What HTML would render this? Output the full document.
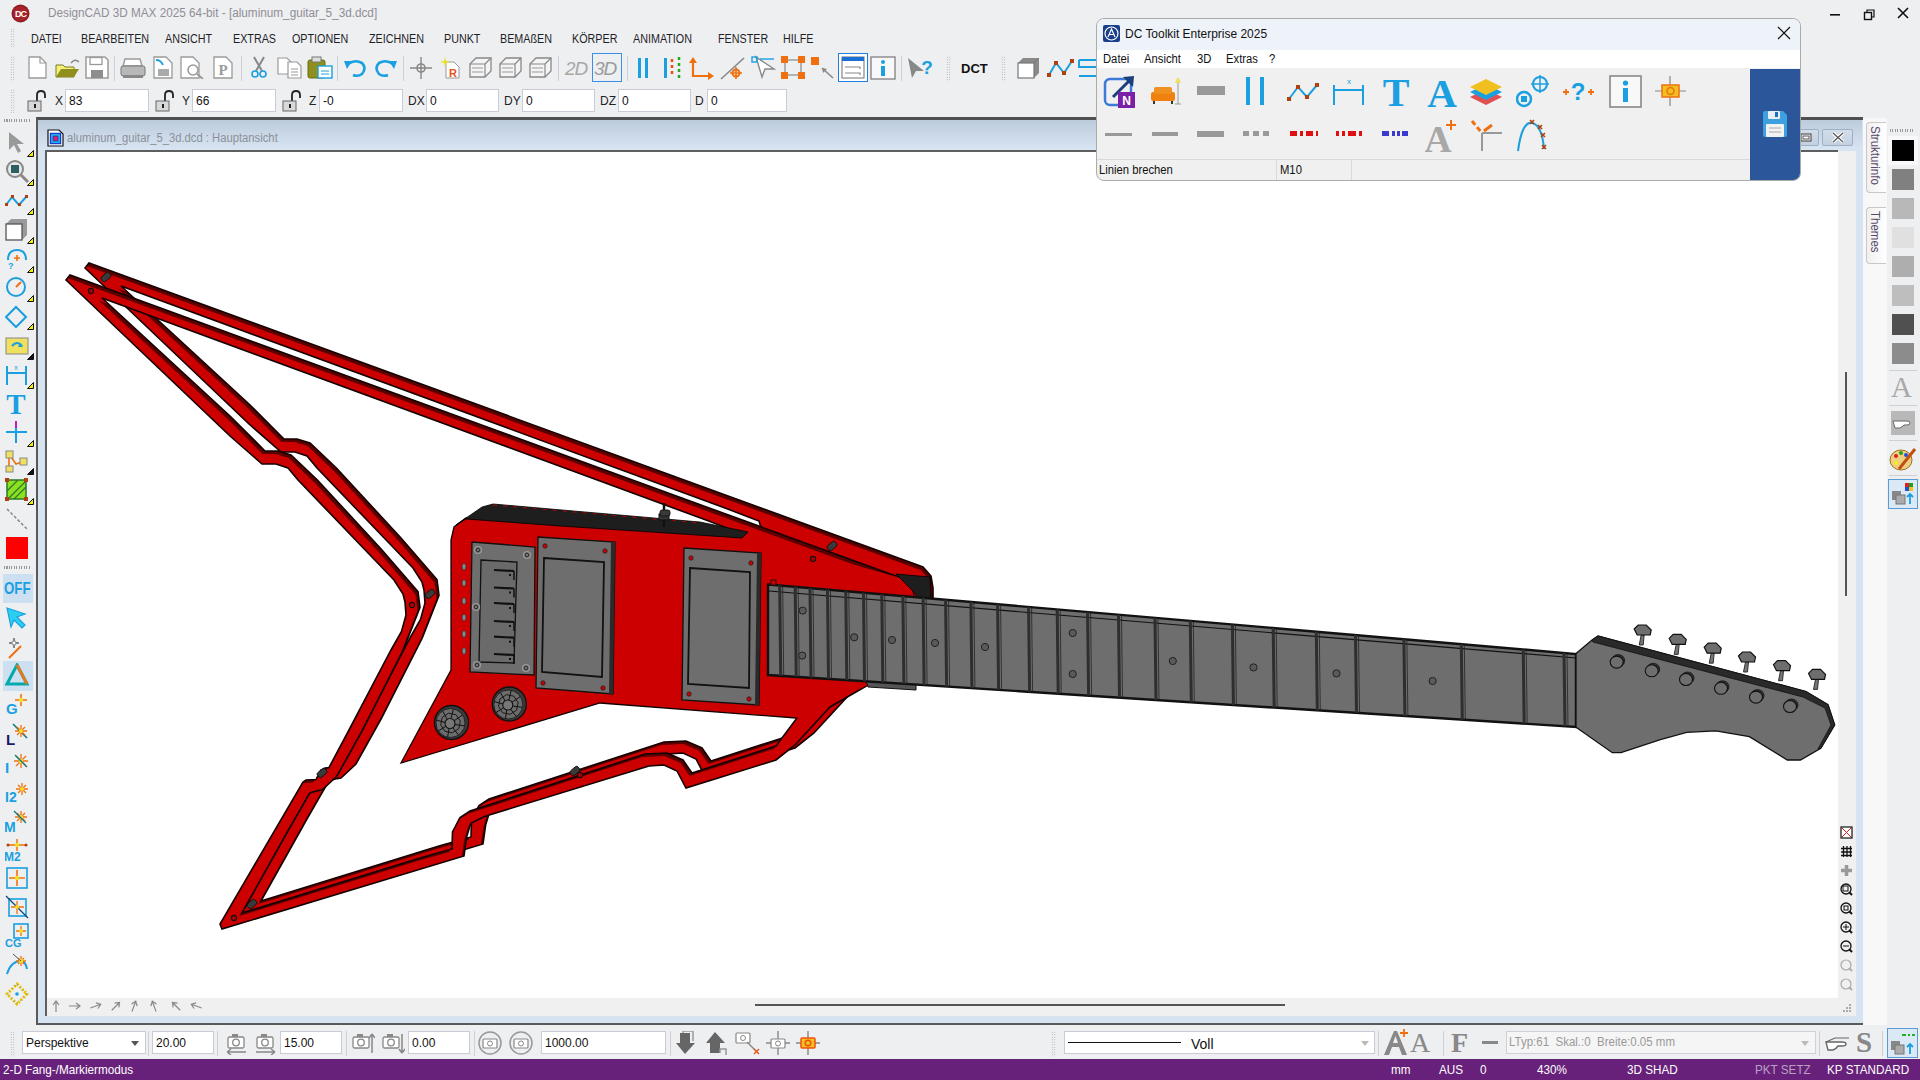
<!DOCTYPE html>
<html><head><meta charset="utf-8">
<style>
*{margin:0;padding:0;box-sizing:border-box}
html,body{width:1920px;height:1080px;overflow:hidden;background:#eeeff1;font-family:"Liberation Sans",sans-serif;position:relative}
.a{position:absolute}
.t{position:absolute;white-space:nowrap;font-size:12px;color:#1a1a1a;line-height:1}
.inp{position:absolute;background:#fff;border:1px solid #c9ccd8}
.inp span{position:absolute;left:3px;top:4px;font-size:12px;color:#111;white-space:nowrap}
.grip{position:absolute;width:5px;background-image:radial-gradient(#a0a0a0 0.7px,transparent 0.8px);background-size:2.5px 2.5px}
</style></head>
<body>
<svg class="a" style="left:11px;top:4px" width="19" height="19" viewBox="0 0 19 19"><circle cx="9.5" cy="9.5" r="9" fill="#8e1b1f"/><circle cx="9.5" cy="9.5" r="7.5" fill="#a8242a"/><text x="9.5" y="13" font-family="Liberation Sans" font-weight="bold" font-size="9" fill="#fff" text-anchor="middle" letter-spacing="-1">DC</text></svg>
<div class="t" style="left:48px;top:7px;font-size:12.5px;color:#8e8e96;transform:scaleX(0.94);transform-origin:left">DesignCAD 3D MAX 2025 64-bit - [aluminum_guitar_5_3d.dcd]</div>
<svg class="a" style="left:1829px;top:9px" width="12" height="12" viewBox="0 0 12 12"><rect x="1" y="5" width="10" height="1.6" fill="#111"/></svg>
<svg class="a" style="left:1862px;top:8px" width="14" height="14" viewBox="0 0 14 14"><rect x="2.5" y="4.5" width="7" height="7" fill="none" stroke="#111" stroke-width="1.4"/><path d="M5,4.5 V2 H12 V9 H9.5" fill="none" stroke="#111" stroke-width="1.2"/></svg>
<svg class="a" style="left:1897px;top:7px" width="12" height="12" viewBox="0 0 12 12"><path d="M1,1 L11,11 M11,1 L1,11" stroke="#111" stroke-width="1.6"/></svg>
<div class="grip" style="left:10px;top:28px;height:19px"></div>
<div class="t" style="left:31px;top:33px;font-size:12.5px;color:#1e1e28;transform:scaleX(0.86);transform-origin:left">DATEI</div>
<div class="t" style="left:81px;top:33px;font-size:12.5px;color:#1e1e28;transform:scaleX(0.86);transform-origin:left">BEARBEITEN</div>
<div class="t" style="left:165px;top:33px;font-size:12.5px;color:#1e1e28;transform:scaleX(0.86);transform-origin:left">ANSICHT</div>
<div class="t" style="left:233px;top:33px;font-size:12.5px;color:#1e1e28;transform:scaleX(0.86);transform-origin:left">EXTRAS</div>
<div class="t" style="left:292px;top:33px;font-size:12.5px;color:#1e1e28;transform:scaleX(0.86);transform-origin:left">OPTIONEN</div>
<div class="t" style="left:369px;top:33px;font-size:12.5px;color:#1e1e28;transform:scaleX(0.86);transform-origin:left">ZEICHNEN</div>
<div class="t" style="left:444px;top:33px;font-size:12.5px;color:#1e1e28;transform:scaleX(0.86);transform-origin:left">PUNKT</div>
<div class="t" style="left:500px;top:33px;font-size:12.5px;color:#1e1e28;transform:scaleX(0.86);transform-origin:left">BEMAßEN</div>
<div class="t" style="left:572px;top:33px;font-size:12.5px;color:#1e1e28;transform:scaleX(0.86);transform-origin:left">KÖRPER</div>
<div class="t" style="left:633px;top:33px;font-size:12.5px;color:#1e1e28;transform:scaleX(0.86);transform-origin:left">ANIMATION</div>
<div class="t" style="left:718px;top:33px;font-size:12.5px;color:#1e1e28;transform:scaleX(0.86);transform-origin:left">FENSTER</div>
<div class="t" style="left:783px;top:33px;font-size:12.5px;color:#1e1e28;transform:scaleX(0.86);transform-origin:left">HILFE</div>
<div class="grip" style="left:10px;top:56px;height:26px"></div>
<svg class="a" style="left:27px;top:56px" width="22" height="23" viewBox="0 0 22 23"><path d="M2,1 H13 L19,7 V22 H2 Z" fill="#fff" stroke="#9a9a9a" stroke-width="1.3"/><path d="M13,1 V7 H19" fill="none" stroke="#9a9a9a" stroke-width="1.2"/></svg>
<svg class="a" style="left:54px;top:57px" width="27" height="22" viewBox="0 0 27 22"><path d="M2,8 H9 L11,10 H20 V20 H2 Z" fill="#f5f07a" stroke="#7a7a20"/><path d="M2,20 L7,12 H25 L20,20 Z" fill="#8f8f1e"/><path d="M17,6 Q21,1 25,5" fill="none" stroke="#888" stroke-width="1.5"/></svg>
<svg class="a" style="left:85px;top:56px" width="24" height="23" viewBox="0 0 24 23"><path d="M1,1 H20 L23,4 V22 H1 Z" fill="#fff" stroke="#9a9a9a" stroke-width="1.5"/><rect x="5" y="1.5" width="12" height="7" fill="#fff" stroke="#9a9a9a" stroke-width="1.3"/><rect x="6" y="14" width="12" height="8" fill="#8e8e8e"/></svg>
<div class="a" style="left:114px;top:56px;width:1px;height:25px;background:#cfd0d6"></div>
<svg class="a" style="left:120px;top:57px" width="26" height="22" viewBox="0 0 26 22"><path d="M5,2 H20 L22,9 H3 Z" fill="#fff" stroke="#9a9a9a" stroke-width="1.4"/><rect x="1" y="9" width="24" height="10" rx="2" fill="#b8b8b8" stroke="#777"/><rect x="3" y="18" width="20" height="3" fill="#888"/></svg>
<svg class="a" style="left:153px;top:56px" width="21" height="23" viewBox="0 0 21 23"><path d="M1,1 H13 L19,7 V22 H1 Z" fill="#fff" stroke="#9a9a9a" stroke-width="1.3"/><rect x="5" y="13" width="11" height="7" fill="#aaa"/><path d="M3,4 Q8,4 10,9" stroke="#1aa0e0" stroke-width="1.8" fill="none"/></svg>
<svg class="a" style="left:180px;top:56px" width="26" height="23" viewBox="0 0 26 23"><path d="M1,1 H13 L19,7 V22 H1 Z" fill="#fff" stroke="#9a9a9a" stroke-width="1.3"/><circle cx="13" cy="14" r="5" fill="#fff" stroke="#9a9a9a" stroke-width="1.6"/><path d="M17,18 L23,23" stroke="#9a9a9a" stroke-width="2"/></svg>
<svg class="a" style="left:213px;top:56px" width="21" height="23" viewBox="0 0 21 23"><path d="M1,1 H13 L19,7 V22 H1 Z" fill="#fff" stroke="#9a9a9a" stroke-width="1.3"/><text x="10" y="19" font-family="Liberation Serif" font-weight="bold" font-size="15" fill="#9a9a9a" text-anchor="middle">P</text></svg>
<div class="a" style="left:241px;top:56px;width:1px;height:25px;background:#cfd0d6"></div>
<svg class="a" style="left:250px;top:56px" width="18" height="23" viewBox="0 0 18 23"><path d="M4,1 L12,15 M14,1 L6,15" stroke="#888" stroke-width="2"/><circle cx="5" cy="18" r="3" fill="none" stroke="#1aa0e0" stroke-width="1.6"/><circle cx="13" cy="18" r="3" fill="none" stroke="#1aa0e0" stroke-width="1.6"/></svg>
<svg class="a" style="left:277px;top:56px" width="26" height="23" viewBox="0 0 26 23"><path d="M1,2 H10 L14,6 V18 H1 Z" fill="#fff" stroke="#9a9a9a" stroke-width="1.2"/><path d="M11,6 H20 L24,10 V22 H11 Z" fill="#fff" stroke="#9a9a9a" stroke-width="1.2"/><path d="M14,13 H21 M14,16 H21 M14,19 H21" stroke="#9a9a9a"/></svg>
<svg class="a" style="left:307px;top:56px" width="26" height="23" viewBox="0 0 26 23"><rect x="1" y="4" width="17" height="18" rx="2" fill="#8f8f1e" stroke="#6a6a10"/><rect x="5" y="1" width="9" height="5" fill="#ddd" stroke="#777"/><rect x="11" y="10" width="14" height="12" fill="#fff" stroke="#1aa0e0" stroke-width="1.4"/><path d="M14,15 H22 M14,18 H22" stroke="#1aa0e0"/></svg>
<div class="a" style="left:337px;top:56px;width:1px;height:25px;background:#cfd0d6"></div>
<svg class="a" style="left:343px;top:58px" width="25" height="20" viewBox="0 0 25 20"><path d="M5,6 Q12,1 19,5 Q24,10 19,16 Q15,19 10,17" fill="none" stroke="#1aa0e0" stroke-width="2.6"/><path d="M1,3 L9,3 L4,11 Z" fill="#1aa0e0"/></svg>
<svg class="a" style="left:373px;top:58px" width="25" height="20" viewBox="0 0 25 20"><path d="M20,6 Q13,1 6,5 Q1,10 6,16 Q10,19 15,17" fill="none" stroke="#1aa0e0" stroke-width="2.6"/><path d="M24,3 L16,3 L21,11 Z" fill="#1aa0e0"/></svg>
<div class="a" style="left:403px;top:56px;width:1px;height:25px;background:#cfd0d6"></div>
<svg class="a" style="left:409px;top:56px" width="24" height="24" viewBox="0 0 24 24"><path d="M12,1 V23 M1,12 H23" stroke="#888" stroke-width="1.4"/><circle cx="12" cy="12" r="4" fill="none" stroke="#888" stroke-width="1.6"/><circle cx="12" cy="12" r="1.3" fill="#888"/></svg>
<svg class="a" style="left:440px;top:56px" width="23" height="23" viewBox="0 0 23 23"><path d="M6,6 H14 L19,11 V22 H6 Z" fill="#fff" stroke="#999"/><path d="M5,1 L6,5 L10,6 L6,7 L5,11 L4,7 L0,6 L4,5 Z" fill="#f0e020"/><text x="13" y="21" font-family="Liberation Sans" font-weight="bold" font-size="11" fill="#e8501a" text-anchor="middle">R</text></svg>
<svg class="a" style="left:468px;top:56px" width="25" height="23" viewBox="0 0 25 23"><path d="M2,8 L8,2 H23 V15 L17,21 H2 Z" fill="#f4f4f4" stroke="#888" stroke-width="1.3"/><path d="M2,8 H17 V21 M17,8 L23,2" stroke="#888" fill="none" stroke-width="1.2"/><path d="M4,12 H15 M4,16 H15" stroke="#999"/></svg>
<svg class="a" style="left:498px;top:56px" width="25" height="23" viewBox="0 0 25 23"><path d="M2,8 L8,2 H23 V15 L17,21 H2 Z" fill="#f4f4f4" stroke="#888" stroke-width="1.3"/><path d="M2,8 H17 V21 M17,8 L23,2" stroke="#888" fill="none" stroke-width="1.2"/><path d="M4,12 H15 M4,16 H15" stroke="#999"/></svg>
<svg class="a" style="left:528px;top:56px" width="25" height="23" viewBox="0 0 25 23"><path d="M2,8 L8,2 H23 V15 L17,21 H2 Z" fill="#f4f4f4" stroke="#888" stroke-width="1.3"/><path d="M2,8 H17 V21 M17,8 L23,2" stroke="#888" fill="none" stroke-width="1.2"/><path d="M4,12 H15 M4,16 H15" stroke="#999"/></svg>
<div class="a" style="left:558px;top:56px;width:1px;height:25px;background:#cfd0d6"></div>
<div class="t" style="left:565px;top:59px;font-size:19px;color:#a8a8a8;font-style:italic;letter-spacing:-1px">2D</div>
<div class="a" style="left:592px;top:53px;width:30px;height:29px;background:transparent;border:1.5px solid #3a8ee6"></div>
<div class="t" style="left:594px;top:59px;font-size:19px;color:#9a9a9a;font-style:italic;letter-spacing:-1px">3D</div>
<div class="a" style="left:627px;top:56px;width:1px;height:25px;background:#cfd0d6"></div>
<svg class="a" style="left:637px;top:57px" width="13" height="22" viewBox="0 0 13 22"><rect x="1" y="1" width="3" height="20" fill="#1aa0e0"/><rect x="8" y="1" width="3" height="20" fill="#1aa0e0"/></svg>
<svg class="a" style="left:663px;top:56px" width="20" height="24" viewBox="0 0 20 24"><rect x="1" y="2" width="3" height="20" fill="#1aa0e0"/><path d="M9,3 V21" stroke="#e8501a" stroke-width="2.5" stroke-dasharray="3,3"/><path d="M16,1 V23" stroke="#22aa22" stroke-width="2.5" stroke-dasharray="3,3"/></svg>
<svg class="a" style="left:689px;top:56px" width="26" height="24" viewBox="0 0 26 24"><path d="M4,3 V20 H23" fill="none" stroke="#f07010" stroke-width="2.2"/><path d="M0,7 L4,1 L8,7 Z M19,16 L25,20 L19,24 Z" fill="#f07010"/></svg>
<svg class="a" style="left:720px;top:56px" width="26" height="24" viewBox="0 0 26 24"><path d="M1,23 L24,2" stroke="#888" stroke-width="1.6"/><circle cx="16" cy="17" r="3.5" fill="none" stroke="#f07010" stroke-width="2"/><path d="M16,11 V23 M10,17 H22" stroke="#f07010" stroke-width="1.6"/></svg>
<svg class="a" style="left:750px;top:55px" width="26" height="25" viewBox="0 0 26 25"><path d="M6,2 L12,22 L15,14 L24,14 Z" fill="#fff" stroke="#888" stroke-width="1.4"/><rect x="2" y="2" width="5" height="5" fill="none" stroke="#1aa0e0" stroke-width="1.4"/><path d="M10,4 H24" stroke="#1aa0e0" stroke-width="1.4"/></svg>
<svg class="a" style="left:780px;top:55px" width="26" height="25" viewBox="0 0 26 25"><rect x="5" y="5" width="16" height="15" fill="none" stroke="#888" stroke-width="1.2"/><rect x="1" y="1" width="7" height="7" fill="#f07010"/><rect x="18" y="1" width="7" height="7" fill="#f07010"/><rect x="1" y="17" width="7" height="7" fill="#f07010"/><rect x="18" y="17" width="7" height="7" fill="#f07010"/></svg>
<svg class="a" style="left:810px;top:55px" width="26" height="25" viewBox="0 0 26 25"><rect x="1" y="2" width="8" height="8" fill="#f07010"/><path d="M12,13 L23,23" stroke="#888" stroke-width="1.6"/><path d="M12,13 L17,14 L13,18 Z" fill="#888"/></svg>
<div class="a" style="left:838px;top:53px;width:30px;height:29px;background:#fff;border:1.5px solid #1e7fe0"></div>
<svg class="a" style="left:841px;top:56px" width="24" height="23" viewBox="0 0 24 23"><rect x="1" y="1" width="22" height="21" fill="#fff" stroke="#888" stroke-width="1.2"/><rect x="1" y="1" width="22" height="4" fill="#1a6fd4"/><path d="M4,11 H19 V13 M4,17 H19 V19" fill="none" stroke="#888" stroke-width="1.2"/></svg>
<svg class="a" style="left:870px;top:56px" width="26" height="24" viewBox="0 0 26 24"><rect x="1" y="1" width="24" height="22" fill="#f8f8f8" stroke="#888" stroke-width="1.4"/><circle cx="13" cy="6" r="2" fill="#1a9fe0"/><rect x="11" y="10" width="4" height="10" fill="#1a9fe0"/></svg>
<div class="a" style="left:901px;top:56px;width:1px;height:25px;background:#cfd0d6"></div>
<svg class="a" style="left:906px;top:56px" width="28" height="24" viewBox="0 0 28 24"><path d="M2,2 L6,22 L10,15 L18,15 Z" fill="#888"/><text x="21" y="18" font-family="Liberation Sans" font-weight="bold" font-size="19" fill="#1a9fe0" text-anchor="middle">?</text></svg>
<div class="grip" style="left:946px;top:56px;height:26px"></div>
<div class="t" style="left:961px;top:62px;font-size:13px;color:#111;font-weight:bold">DCT</div>
<div class="grip" style="left:1001px;top:56px;height:26px"></div>
<svg class="a" style="left:1016px;top:56px" width="25" height="24" viewBox="0 0 25 24"><path d="M2,7 L7,2 H23 V17 L18,22 H2 Z" fill="#8a8a8a"/><rect x="2" y="7" width="16" height="15" fill="#fff" stroke="#777" stroke-width="1.2"/><path d="M18,7 L23,2" stroke="#777"/></svg>
<svg class="a" style="left:1047px;top:58px" width="27" height="20" viewBox="0 0 27 20"><path d="M2,17 L9,5 L17,15 L25,3" fill="none" stroke="#1a9fe0" stroke-width="2"/><rect x="0" y="15" width="4" height="4" fill="#b04010"/><rect x="7" y="3" width="4" height="4" fill="#b04010"/><rect x="15" y="13" width="4" height="4" fill="#b04010"/><rect x="23" y="1" width="4" height="4" fill="#b04010"/></svg>
<svg class="a" style="left:1077px;top:56px" width="20" height="24" viewBox="0 0 20 24"><path d="M2,4 H20 M2,4 V11 H20 M2,20 H20 V13" fill="none" stroke="#1a9fe0" stroke-width="2"/></svg>
<div class="grip" style="left:10px;top:89px;height:24px"></div>
<svg class="a" style="left:27px;top:90px" width="20" height="22" viewBox="0 0 20 22"><path d="M10,11 V5 Q10,1 14,1 Q18,1 18,5 V8" fill="none" stroke="#222" stroke-width="1.8"/><rect x="1" y="11" width="13" height="10" fill="#d8d8d8" stroke="#666"/><rect x="7" y="14" width="2" height="4" fill="#222"/></svg>
<div class="t" style="left:55px;top:95px;font-size:12px;color:#222;">X</div>
<div class="inp" style="left:65px;top:89px;width:84px;height:23px;"><span>83</span></div>
<svg class="a" style="left:155px;top:90px" width="20" height="22" viewBox="0 0 20 22"><path d="M10,11 V5 Q10,1 14,1 Q18,1 18,5 V8" fill="none" stroke="#222" stroke-width="1.8"/><rect x="1" y="11" width="13" height="10" fill="#d8d8d8" stroke="#666"/><rect x="7" y="14" width="2" height="4" fill="#222"/></svg>
<div class="t" style="left:182px;top:95px;font-size:12px;color:#222;">Y</div>
<div class="inp" style="left:192px;top:89px;width:84px;height:23px;"><span>66</span></div>
<svg class="a" style="left:282px;top:90px" width="20" height="22" viewBox="0 0 20 22"><path d="M10,11 V5 Q10,1 14,1 Q18,1 18,5 V8" fill="none" stroke="#222" stroke-width="1.8"/><rect x="1" y="11" width="13" height="10" fill="#d8d8d8" stroke="#666"/><rect x="7" y="14" width="2" height="4" fill="#222"/></svg>
<div class="t" style="left:309px;top:95px;font-size:12px;color:#222;">Z</div>
<div class="inp" style="left:319px;top:89px;width:84px;height:23px;"><span>-0</span></div>
<div class="t" style="left:408px;top:95px;font-size:12px;color:#222;">DX</div>
<div class="inp" style="left:426px;top:89px;width:73px;height:23px;"><span>0</span></div>
<div class="t" style="left:504px;top:95px;font-size:12px;color:#222;">DY</div>
<div class="inp" style="left:522px;top:89px;width:73px;height:23px;"><span>0</span></div>
<div class="t" style="left:600px;top:95px;font-size:12px;color:#222;">DZ</div>
<div class="inp" style="left:618px;top:89px;width:73px;height:23px;"><span>0</span></div>
<div class="t" style="left:695px;top:95px;font-size:12px;color:#222;">D</div>
<div class="inp" style="left:707px;top:89px;width:80px;height:23px;"><span>0</span></div>

<div class="a" style="left:36px;top:117px;width:1827px;height:908px;background:#d6e3f1;border-top:3px solid #505050;border-left:2px solid #595959;border-bottom:2px solid #595959"></div>
<div class="a" style="left:38px;top:120px;width:1824px;height:30px;background:linear-gradient(#bccbdb,#d8e5f3)"></div>
<svg class="a" style="left:47px;top:129px" width="17" height="18" viewBox="0 0 17 18"><path d="M1,1 H12 L16,5 V17 H1 Z" fill="#fff" stroke="#111" stroke-width="1.2"/><rect x="3.5" y="4.5" width="10" height="10" fill="#2ad0f0" stroke="#1a3fd0" stroke-width="1.5"/><rect x="6" y="7" width="5" height="5" fill="#e02060" stroke="#1a3fd0"/></svg>
<div class="t" style="left:67px;top:132px;font-size:12.5px;color:#8c9099;transform:scaleX(0.9);transform-origin:left">aluminum_guitar_5_3d.dcd : Hauptansicht</div>
<div class="a" style="left:45px;top:150px;width:1793px;height:866px;background:#fff;border-left:2px solid #5e5e5e;border-top:2px solid #5e5e5e"></div>
<div class="a" style="left:47px;top:998px;width:1791px;height:18px;background:#f0f0f0"></div>
<div class="a" style="left:1838px;top:151px;width:18px;height:865px;background:#f0f0f0"></div>
<div class="a" style="left:1790px;top:129px;width:29px;height:17px;border:1px solid #9fb0c6;border-radius:2px;background:linear-gradient(#d3deea,#c3d0df)"></div>
<div class="a" style="left:1822px;top:129px;width:31px;height:17px;border:1px solid #9fb0c6;border-radius:2px;background:linear-gradient(#d3deea,#c3d0df)"></div>
<svg class="a" style="left:1800px;top:133px" width="12" height="9" viewBox="0 0 12 9"><rect x="1" y="1" width="10" height="7" fill="#fff" stroke="#555" stroke-width="1.2"/><rect x="3" y="3" width="6" height="3" fill="none" stroke="#555"/></svg>
<svg class="a" style="left:1831px;top:132px" width="14" height="11" viewBox="0 0 14 11"><path d="M2,1 L12,10 M12,1 L2,10" stroke="#fff" stroke-width="3.5"/><path d="M2,1 L12,10 M12,1 L2,10" stroke="#555" stroke-width="1.2"/></svg>

<svg id="guitar" class="a" style="left:0;top:0" width="1920" height="1080">
<defs>
<path id="frame" fill-rule="evenodd" clip-rule="evenodd" d="M66,280 L70,275 L904,579 L912,588 L914,600 L914,640 L900,660 L868,685 L830,707 L795,745 L776,760 L686,788 L677,771 L664,765 L649,766 L486,816 L482.5,817.5 L470.8,823.3 L466.7,836.7 L464,856 L222,929 L220,924 L303,782 L306,780 L316,779.5 L321,770 L329,767.5 L349,730 L391,650 L401.5,631.5 L406,615 L405,602 L403,594 L394,580 L370,555 L298,480 L288,468 L276,464 L262,464 L230,436 Z
M102,298 L706,520 L740,533 L790,700 L797,718 L776,746 L692,773 L683,760 L667,753 L645,754 L470,811 L460,817.5 L452.5,832 L452,849 L420,858 L242,913 L288.5,830 L309.8,793 L318,790.6 L322,790 L337,776 L362.6,730 L403.3,650 L420,607.4 L418,591.7 L382,550 L317.4,480 L291,455 L278,451 L265,451 L230,416 Z"/>
<clipPath id="fc"><use href="#frame"/></clipPath>
</defs>
<g transform="translate(19,-12)"><use href="#frame" fill="#5a0000"/><g clip-path="url(#fc)"><use href="#frame" transform="translate(-2.5,3)" fill="#cc0000"/></g><use href="#frame" fill="none" stroke="#150000" stroke-width="1.6"/></g>
<use href="#frame" fill="#5a0000"/><g clip-path="url(#fc)"><use href="#frame" transform="translate(-2.5,3)" fill="#cc0000"/></g><use href="#frame" fill="none" stroke="#150000" stroke-width="1.6"/>
<path fill="#cc0000" d="M401,763 L451,670 L451,540 L454,527 L466,518 L745,534 L904,579 L912,588 L914,600 L914,640 L900,660 L868,685 L796,718 L600,703 Z"/>
<path fill="none" stroke="#150000" stroke-width="1.3" d="M745,534 L560,523 L466,518 L454,527 L451,540 L451,670 L401,763 L600,703 L796,718"/>
<path fill="#1e1e1e" stroke="#000" stroke-width="0.8" d="M456,525 L482,507 L493,504 L700,522 L748,532 L742,538 L560,526 L466,519 Z"/>
<path fill="none" stroke="#cc0000" stroke-width="0.8" stroke-dasharray="4,6" d="M493,505 L700,523"/>
<path d="M664,503 V527" stroke="#111" stroke-width="2.5"/><rect x="659" y="514" width="10" height="6" fill="#333" stroke="#111"/>
<path fill="#1e1e1e" stroke="#000" stroke-width="0.8" d="M896,574 L930,577 L931,598 L918,598 L912,590 Z"/>
<circle cx="813" cy="559" r="2.6" fill="#aa0000" stroke="#111" stroke-width="1.1"/>
<circle cx="580" cy="775" r="2.6" fill="#aa0000" stroke="#111" stroke-width="1.1"/>
<circle cx="91" cy="291" r="2.6" fill="#aa0000" stroke="#111" stroke-width="1.1"/>
<circle cx="412" cy="605" r="2.6" fill="#aa0000" stroke="#111" stroke-width="1.1"/>
<circle cx="234" cy="918" r="2.6" fill="#aa0000" stroke="#111" stroke-width="1.1"/>
<g transform="translate(106,277) rotate(-40)"><rect x="-5" y="-3" width="10" height="6" rx="2" fill="#3a3a3a" stroke="#111" stroke-width="0.9"/></g>
<g transform="translate(430,594) rotate(-40)"><rect x="-5" y="-3" width="10" height="6" rx="2" fill="#3a3a3a" stroke="#111" stroke-width="0.9"/></g>
<g transform="translate(252,904) rotate(-40)"><rect x="-5" y="-3" width="10" height="6" rx="2" fill="#3a3a3a" stroke="#111" stroke-width="0.9"/></g>
<g transform="translate(322,773) rotate(-40)"><rect x="-5" y="-3" width="10" height="6" rx="2" fill="#3a3a3a" stroke="#111" stroke-width="0.9"/></g>
<g transform="translate(575,771) rotate(-40)"><rect x="-5" y="-3" width="10" height="6" rx="2" fill="#3a3a3a" stroke="#111" stroke-width="0.9"/></g>
<g transform="translate(665,513) rotate(0)"><rect x="-5" y="-3" width="10" height="6" rx="2" fill="#3a3a3a" stroke="#111" stroke-width="0.9"/></g>
<g transform="translate(832,546) rotate(-40)"><rect x="-5" y="-3" width="10" height="6" rx="2" fill="#3a3a3a" stroke="#111" stroke-width="0.9"/></g>
<path fill="#6e6e6e" stroke="#111" stroke-width="1.3" d="M472,542 L535,547 L534,675 L470,672 Z"/>
<path fill="#6a6a6a" stroke="#111" stroke-width="1.3" d="M481,560 L517,562 L514,663 L479,662 Z"/>
<path d="M494,570 L514,571" stroke="#111" stroke-width="2.2"/><path d="M514,571 V580" stroke="#111" stroke-width="1.5"/><rect x="509" y="574" width="2" height="2" fill="#111"/>
<path d="M494,587.5 L514,588.5" stroke="#111" stroke-width="2.2"/><path d="M514,588.5 V597.5" stroke="#111" stroke-width="1.5"/><rect x="509" y="591.5" width="2" height="2" fill="#111"/>
<path d="M494,603 L514,604" stroke="#111" stroke-width="2.2"/><path d="M514,604 V613" stroke="#111" stroke-width="1.5"/><rect x="509" y="607" width="2" height="2" fill="#111"/>
<path d="M494,621 L514,622" stroke="#111" stroke-width="2.2"/><path d="M514,622 V631" stroke="#111" stroke-width="1.5"/><rect x="509" y="625" width="2" height="2" fill="#111"/>
<path d="M494,636.7 L514,637.7" stroke="#111" stroke-width="2.2"/><path d="M514,637.7 V646.7" stroke="#111" stroke-width="1.5"/><rect x="509" y="640.7" width="2" height="2" fill="#111"/>
<path d="M494,654 L514,655" stroke="#111" stroke-width="2.2"/><path d="M514,655 V664" stroke="#111" stroke-width="1.5"/><rect x="509" y="658" width="2" height="2" fill="#111"/>
<ellipse cx="464" cy="566.7" rx="2" ry="3.2" fill="#888" stroke="#333" stroke-width="0.8"/>
<ellipse cx="464" cy="583" rx="2" ry="3.2" fill="#888" stroke="#333" stroke-width="0.8"/>
<ellipse cx="464" cy="601" rx="2" ry="3.2" fill="#888" stroke="#333" stroke-width="0.8"/>
<ellipse cx="464" cy="617.5" rx="2" ry="3.2" fill="#888" stroke="#333" stroke-width="0.8"/>
<ellipse cx="464" cy="634" rx="2" ry="3.2" fill="#888" stroke="#333" stroke-width="0.8"/>
<ellipse cx="464" cy="651" rx="2" ry="3.2" fill="#888" stroke="#333" stroke-width="0.8"/>
<circle cx="478" cy="550" r="3.5" fill="#777" stroke="#999" stroke-width="1.2"/><circle cx="478" cy="550" r="1.8" fill="none" stroke="#222" stroke-width="0.9"/>
<circle cx="527" cy="555" r="3.5" fill="#777" stroke="#999" stroke-width="1.2"/><circle cx="527" cy="555" r="1.8" fill="none" stroke="#222" stroke-width="0.9"/>
<circle cx="477" cy="665" r="3.5" fill="#777" stroke="#999" stroke-width="1.2"/><circle cx="477" cy="665" r="1.8" fill="none" stroke="#222" stroke-width="0.9"/>
<circle cx="526" cy="668" r="3.5" fill="#777" stroke="#999" stroke-width="1.2"/><circle cx="526" cy="668" r="1.8" fill="none" stroke="#222" stroke-width="0.9"/>
<circle cx="476" cy="607" r="3.5" fill="#777" stroke="#999" stroke-width="1.2"/><circle cx="476" cy="607" r="1.8" fill="none" stroke="#222" stroke-width="0.9"/>
<path fill="#6e6e6e" stroke="#111" stroke-width="1.3" d="M538,537 L615,542 L613,694 L536,688 Z"/><path fill="#2a2a2a" d="M611,542 L615,542 L613,694 L609,694 Z"/><path fill="#6e6e6e" stroke="#111" stroke-width="1.8" d="M544,558 L604,562 L602,677 L542,672 Z"/><circle cx="545" cy="546" r="2.2" fill="#cc0000" stroke="#222" stroke-width="0.8"/><circle cx="605" cy="551" r="2.2" fill="#cc0000" stroke="#222" stroke-width="0.8"/><circle cx="543" cy="683" r="2.2" fill="#cc0000" stroke="#222" stroke-width="0.8"/><circle cx="603" cy="688" r="2.2" fill="#cc0000" stroke="#222" stroke-width="0.8"/>
<path fill="#6e6e6e" stroke="#111" stroke-width="1.3" d="M684,548 L761,553 L759,705 L682,700 Z"/><path fill="#2a2a2a" d="M757,553 L761,553 L759,705 L755,705 Z"/><path fill="#6e6e6e" stroke="#111" stroke-width="1.8" d="M690,568 L750,572 L749,688 L688,684 Z"/><circle cx="691" cy="558" r="2.2" fill="#cc0000" stroke="#222" stroke-width="0.8"/><circle cx="751" cy="563" r="2.2" fill="#cc0000" stroke="#222" stroke-width="0.8"/><circle cx="689" cy="694" r="2.2" fill="#cc0000" stroke="#222" stroke-width="0.8"/><circle cx="749" cy="699" r="2.2" fill="#cc0000" stroke="#222" stroke-width="0.8"/>
<circle cx="451.5" cy="722.5" r="17" fill="#3a3a3a" stroke="#111" stroke-width="1.4"/><circle cx="450.5" cy="723.0" r="14.5" fill="#6c6c6c" stroke="#222" stroke-width="1"/><circle cx="450.0" cy="723.5" r="5" fill="#777" stroke="#111" stroke-width="1.1"/><path d="M454.9,724.5 L464.2,725.8" stroke="#111" stroke-width="1"/><path d="M452.8,727.7 L458.2,734.7" stroke="#111" stroke-width="1"/><path d="M449.0,728.4 L447.7,736.7" stroke="#111" stroke-width="1"/><path d="M445.8,726.3 L438.8,730.7" stroke="#111" stroke-width="1"/><path d="M445.1,722.5 L436.8,720.2" stroke="#111" stroke-width="1"/><path d="M447.2,719.3 L442.8,711.3" stroke="#111" stroke-width="1"/><path d="M451.0,718.6 L453.3,709.3" stroke="#111" stroke-width="1"/><path d="M454.2,720.7 L462.2,715.3" stroke="#111" stroke-width="1"/><polygon points="458.8,728.6 452.4,732.8 444.9,731.3 440.7,724.9 442.2,717.4 448.6,713.2 456.1,714.7 460.3,721.1" fill="none" stroke="#111" stroke-width="0.9"/>
<circle cx="509.3" cy="704" r="17" fill="#3a3a3a" stroke="#111" stroke-width="1.4"/><circle cx="508.3" cy="704.5" r="14.5" fill="#6c6c6c" stroke="#222" stroke-width="1"/><circle cx="507.8" cy="705" r="5" fill="#777" stroke="#111" stroke-width="1.1"/><path d="M512.7,706.0 L522.0,707.3" stroke="#111" stroke-width="1"/><path d="M510.6,709.2 L516.0,716.2" stroke="#111" stroke-width="1"/><path d="M506.8,709.9 L505.5,718.2" stroke="#111" stroke-width="1"/><path d="M503.6,707.8 L496.6,712.2" stroke="#111" stroke-width="1"/><path d="M502.9,704.0 L494.6,701.7" stroke="#111" stroke-width="1"/><path d="M505.0,700.8 L500.6,692.8" stroke="#111" stroke-width="1"/><path d="M508.8,700.1 L511.1,690.8" stroke="#111" stroke-width="1"/><path d="M512.0,702.2 L520.0,696.8" stroke="#111" stroke-width="1"/><polygon points="516.6,710.1 510.2,714.3 502.7,712.8 498.5,706.4 500.0,698.9 506.4,694.7 513.9,696.2 518.1,702.6" fill="none" stroke="#111" stroke-width="0.9"/>
<path fill="#555" stroke="#111" stroke-width="1" d="M866,680 L916,684 L916,690 L868,687 Z"/>
<path fill="#6e6e6e" stroke="#111" stroke-width="2.4" d="M768,584.5 L1576,654 L1576,727 L768,675 Z"/>
<path fill="none" stroke="#111" stroke-width="1.2" d="M769,591 L1576,658"/>
<path d="M779.7,585.5063737623763 L780.7,675.7529702970297" stroke="#2e2e2e" stroke-width="3"/><path d="M782.7,586.5063737623763 L783.7,675.7529702970297" stroke="#222" stroke-width="0.8"/>
<path d="M795.2,586.8396039603961 L796.2,676.7504950495049" stroke="#2e2e2e" stroke-width="3"/><path d="M798.2,587.8396039603961 L799.2,676.7504950495049" stroke="#222" stroke-width="0.8"/>
<path d="M810,588.1126237623762 L811,677.7029702970297" stroke="#2e2e2e" stroke-width="3"/><path d="M813,589.1126237623762 L814,677.7029702970297" stroke="#222" stroke-width="0.8"/>
<path d="M827.5,589.6178836633663 L828.5,678.8292079207921" stroke="#2e2e2e" stroke-width="3"/><path d="M830.5,590.6178836633663 L831.5,678.8292079207921" stroke="#222" stroke-width="0.8"/>
<path d="M845.8,591.1919554455445 L846.8,680.0069306930693" stroke="#2e2e2e" stroke-width="3"/><path d="M848.8,592.1919554455445 L849.8,680.0069306930693" stroke="#222" stroke-width="0.8"/>
<path d="M863.5,592.7144183168317 L864.5,681.1460396039604" stroke="#2e2e2e" stroke-width="3"/><path d="M866.5,593.7144183168317 L867.5,681.1460396039604" stroke="#222" stroke-width="0.8"/>
<path d="M881.8,594.2884900990099 L882.8,682.3237623762376" stroke="#2e2e2e" stroke-width="3"/><path d="M884.8,595.2884900990099 L885.8,682.3237623762376" stroke="#222" stroke-width="0.8"/>
<path d="M902.9,596.1034034653466 L903.9,683.6816831683168" stroke="#2e2e2e" stroke-width="3"/><path d="M905.9,597.1034034653466 L906.9,683.6816831683168" stroke="#222" stroke-width="0.8"/>
<path d="M923.1,597.8409034653465 L924.1,684.9816831683169" stroke="#2e2e2e" stroke-width="3"/><path d="M926.1,598.8409034653465 L927.1,684.9816831683169" stroke="#222" stroke-width="0.8"/>
<path d="M945.6,599.7762376237624 L946.6,686.4297029702971" stroke="#2e2e2e" stroke-width="3"/><path d="M948.6,600.7762376237624 L949.6,686.4297029702971" stroke="#222" stroke-width="0.8"/>
<path d="M970.9,601.9524133663366 L971.9,688.0579207920792" stroke="#2e2e2e" stroke-width="3"/><path d="M973.9,602.9524133663366 L974.9,688.0579207920792" stroke="#222" stroke-width="0.8"/>
<path d="M997.6,604.2490099009901 L998.6,689.7762376237624" stroke="#2e2e2e" stroke-width="3"/><path d="M1000.6,605.2490099009901 L1001.6,689.7762376237624" stroke="#222" stroke-width="0.8"/>
<path d="M1028.6,606.9154702970297 L1029.6,691.7712871287129" stroke="#2e2e2e" stroke-width="3"/><path d="M1031.6,607.9154702970297 L1032.6,691.7712871287129" stroke="#222" stroke-width="0.8"/>
<path d="M1057.2,609.3754950495049 L1058.2,693.6118811881188" stroke="#2e2e2e" stroke-width="3"/><path d="M1060.2,610.3754950495049 L1061.2,693.6118811881188" stroke="#222" stroke-width="0.8"/>
<path d="M1087.6,611.9903465346534 L1088.6,695.5683168316832" stroke="#2e2e2e" stroke-width="3"/><path d="M1090.6,612.9903465346534 L1091.6,695.5683168316832" stroke="#222" stroke-width="0.8"/>
<path d="M1118.5,614.6482054455446 L1119.5,697.5569306930693" stroke="#2e2e2e" stroke-width="3"/><path d="M1121.5,615.6482054455446 L1122.5,697.5569306930693" stroke="#222" stroke-width="0.8"/>
<path d="M1155,617.7877475247525 L1156,699.9059405940594" stroke="#2e2e2e" stroke-width="3"/><path d="M1158,618.7877475247525 L1159,699.9059405940594" stroke="#222" stroke-width="0.8"/>
<path d="M1190.3,620.8240717821782 L1191.3,702.1777227722772" stroke="#2e2e2e" stroke-width="3"/><path d="M1193.3,621.8240717821782 L1194.3,702.1777227722772" stroke="#222" stroke-width="0.8"/>
<path d="M1232.4,624.4452970297029 L1233.4,704.8871287128713" stroke="#2e2e2e" stroke-width="3"/><path d="M1235.4,625.4452970297029 L1236.4,704.8871287128713" stroke="#222" stroke-width="0.8"/>
<path d="M1273.2,627.954702970297 L1274.2,707.5128712871287" stroke="#2e2e2e" stroke-width="3"/><path d="M1276.2,628.954702970297 L1277.2,707.5128712871287" stroke="#222" stroke-width="0.8"/>
<path d="M1316.3,631.661943069307 L1317.3,710.2866336633664" stroke="#2e2e2e" stroke-width="3"/><path d="M1319.3,632.661943069307 L1320.3,710.2866336633664" stroke="#222" stroke-width="0.8"/>
<path d="M1355.5,635.0337252475248 L1356.5,712.809405940594" stroke="#2e2e2e" stroke-width="3"/><path d="M1358.5,636.0337252475248 L1359.5,712.809405940594" stroke="#222" stroke-width="0.8"/>
<path d="M1403.9,639.196844059406 L1404.9,715.9242574257426" stroke="#2e2e2e" stroke-width="3"/><path d="M1406.9,640.196844059406 L1407.9,715.9242574257426" stroke="#222" stroke-width="0.8"/>
<path d="M1461.3,644.1340965346535 L1462.3,719.6183168316832" stroke="#2e2e2e" stroke-width="3"/><path d="M1464.3,645.1340965346535 L1465.3,719.6183168316832" stroke="#222" stroke-width="0.8"/>
<path d="M1523.2,649.4584158415842 L1524.2,723.6019801980198" stroke="#2e2e2e" stroke-width="3"/><path d="M1526.2,650.4584158415842 L1527.2,723.6019801980198" stroke="#222" stroke-width="0.8"/>
<path d="M1564,652.9678217821782 L1565,726.2277227722773" stroke="#2e2e2e" stroke-width="3"/><path d="M1567,653.9678217821782 L1568,726.2277227722773" stroke="#222" stroke-width="0.8"/>
<circle cx="802.7" cy="610.6" r="3.6" fill="#5a5a5a" stroke="#222" stroke-width="1"/>
<circle cx="802.2" cy="655.6" r="3.6" fill="#5a5a5a" stroke="#222" stroke-width="1"/>
<circle cx="854.2" cy="637.3" r="3.6" fill="#5a5a5a" stroke="#222" stroke-width="1"/>
<circle cx="892" cy="640" r="3.6" fill="#5a5a5a" stroke="#222" stroke-width="1"/>
<circle cx="935" cy="643" r="3.6" fill="#5a5a5a" stroke="#222" stroke-width="1"/>
<circle cx="985" cy="647" r="3.6" fill="#5a5a5a" stroke="#222" stroke-width="1"/>
<circle cx="1072.7" cy="633" r="3.6" fill="#5a5a5a" stroke="#222" stroke-width="1"/>
<circle cx="1072.7" cy="674" r="3.6" fill="#5a5a5a" stroke="#222" stroke-width="1"/>
<circle cx="1172.8" cy="661" r="3.6" fill="#5a5a5a" stroke="#222" stroke-width="1"/>
<circle cx="1253.5" cy="667.4" r="3.6" fill="#5a5a5a" stroke="#222" stroke-width="1"/>
<circle cx="1336.5" cy="673.4" r="3.6" fill="#5a5a5a" stroke="#222" stroke-width="1"/>
<circle cx="1432.6" cy="681" r="3.6" fill="#5a5a5a" stroke="#222" stroke-width="1"/>
<rect x="771" y="580" width="5" height="5" fill="#cc0000" stroke="#111" stroke-width="0.8"/>
<path fill="#6e6e6e" stroke="#111" stroke-width="1.3" d="M1576,653.5 L1592,640 L1598,636 L1806,691.5 L1828,704.6 L1834.7,725 L1820.8,748.3 L1800.4,760 L1787.3,760 L1749.4,736.7 L1715.8,730.8 L1686.7,732.3 L1660.4,739.6 L1621,752.7 L1612.3,752.7 L1576,727.2 Z"/>
<path fill="#2a2a2a" stroke="#111" stroke-width="0.8" d="M1592,640 L1598,636 L1806,691.5 L1828,704.6 L1834.7,725 L1820.8,748.3 L1818,749 L1831,725 L1825,708 L1803,697 L1593,642 Z"/>
<ellipse cx="1618.2" cy="660.6" rx="6.5" ry="6" fill="#333" stroke="#111" stroke-width="0.8"/><ellipse cx="1616.7" cy="662.1" rx="6.5" ry="6" fill="#6e6e6e" stroke="#111" stroke-width="1.1"/>
<ellipse cx="1653.2" cy="669.3" rx="6.5" ry="6" fill="#333" stroke="#111" stroke-width="0.8"/><ellipse cx="1651.7" cy="670.8" rx="6.5" ry="6" fill="#6e6e6e" stroke="#111" stroke-width="1.1"/>
<ellipse cx="1687.5" cy="678" rx="6.5" ry="6" fill="#333" stroke="#111" stroke-width="0.8"/><ellipse cx="1686" cy="679.5" rx="6.5" ry="6" fill="#6e6e6e" stroke="#111" stroke-width="1.1"/>
<ellipse cx="1722.5" cy="686.8" rx="6.5" ry="6" fill="#333" stroke="#111" stroke-width="0.8"/><ellipse cx="1721" cy="688.3" rx="6.5" ry="6" fill="#6e6e6e" stroke="#111" stroke-width="1.1"/>
<ellipse cx="1757.5" cy="695.6" rx="6.5" ry="6" fill="#333" stroke="#111" stroke-width="0.8"/><ellipse cx="1756" cy="697.1" rx="6.5" ry="6" fill="#6e6e6e" stroke="#111" stroke-width="1.1"/>
<ellipse cx="1791.5" cy="705" rx="6.5" ry="6" fill="#333" stroke="#111" stroke-width="0.8"/><ellipse cx="1790" cy="706.5" rx="6.5" ry="6" fill="#6e6e6e" stroke="#111" stroke-width="1.1"/>
<path d="M1639.2,645 L1641.2,635 L1644.2,635 L1643.2,645 Z" fill="#777" stroke="#222" stroke-width="0.9"/>
<path d="M1634.2,629 L1638.2,625 L1646.2,625 L1651.2,630 L1650.2,635 L1637.2,635 Z" fill="#6e6e6e" stroke="#111" stroke-width="1.2"/>
<path d="M1674.2,654.4 L1676.2,644.4 L1679.2,644.4 L1678.2,654.4 Z" fill="#777" stroke="#222" stroke-width="0.9"/>
<path d="M1669.2,638.4 L1673.2,634.4 L1681.2,634.4 L1686.2,639.4 L1685.2,644.4 L1672.2,644.4 Z" fill="#6e6e6e" stroke="#111" stroke-width="1.2"/>
<path d="M1709.2,663.2 L1711.2,653.2 L1714.2,653.2 L1713.2,663.2 Z" fill="#777" stroke="#222" stroke-width="0.9"/>
<path d="M1704.2,647.2 L1708.2,643.2 L1716.2,643.2 L1721.2,648.2 L1720.2,653.2 L1707.2,653.2 Z" fill="#6e6e6e" stroke="#111" stroke-width="1.2"/>
<path d="M1743.5,672 L1745.5,662 L1748.5,662 L1747.5,672 Z" fill="#777" stroke="#222" stroke-width="0.9"/>
<path d="M1738.5,656 L1742.5,652 L1750.5,652 L1755.5,657 L1754.5,662 L1741.5,662 Z" fill="#6e6e6e" stroke="#111" stroke-width="1.2"/>
<path d="M1778.5,680.7 L1780.5,670.7 L1783.5,670.7 L1782.5,680.7 Z" fill="#777" stroke="#222" stroke-width="0.9"/>
<path d="M1773.5,664.7 L1777.5,660.7 L1785.5,660.7 L1790.5,665.7 L1789.5,670.7 L1776.5,670.7 Z" fill="#6e6e6e" stroke="#111" stroke-width="1.2"/>
<path d="M1813.5,689.4 L1815.5,679.4 L1818.5,679.4 L1817.5,689.4 Z" fill="#777" stroke="#222" stroke-width="0.9"/>
<path d="M1808.5,673.4 L1812.5,669.4 L1820.5,669.4 L1825.5,674.4 L1824.5,679.4 L1811.5,679.4 Z" fill="#6e6e6e" stroke="#111" stroke-width="1.2"/>
</svg>
<div class="a" style="left:1845px;top:372px;width:2px;height:224px;background:#555"></div>
<div class="a" style="left:755px;top:1004px;width:530px;height:2px;background:#555"></div>
<svg class="a" style="left:50px;top:994px" width="160" height="24" viewBox="0 0 160 24"><g transform="translate(6,12) rotate(-90)"><path d="M-6,0 H5 M1,-3 L5,0 L1,3" fill="none" stroke="#888" stroke-width="1.2"/></g><g transform="translate(25,12) rotate(0)"><path d="M-6,0 H5 M1,-3 L5,0 L1,3" fill="none" stroke="#888" stroke-width="1.2"/></g><g transform="translate(46,12) rotate(-20)"><path d="M-6,0 H5 M1,-3 L5,0 L1,3" fill="none" stroke="#888" stroke-width="1.2"/></g><g transform="translate(66,12) rotate(-45)"><path d="M-6,0 H5 M1,-3 L5,0 L1,3" fill="none" stroke="#888" stroke-width="1.2"/></g><g transform="translate(84,12) rotate(-70)"><path d="M-6,0 H5 M1,-3 L5,0 L1,3" fill="none" stroke="#888" stroke-width="1.2"/></g><g transform="translate(104,12) rotate(-110)"><path d="M-6,0 H5 M1,-3 L5,0 L1,3" fill="none" stroke="#888" stroke-width="1.2"/></g><g transform="translate(126,12) rotate(-135)"><path d="M-6,0 H5 M1,-3 L5,0 L1,3" fill="none" stroke="#888" stroke-width="1.2"/></g><g transform="translate(146,12) rotate(-160)"><path d="M-6,0 H5 M1,-3 L5,0 L1,3" fill="none" stroke="#888" stroke-width="1.2"/></g></svg>
<svg class="a" style="left:1840px;top:826px" width="14" height="170" viewBox="0 0 14 170"><rect x="1" y="1" width="11" height="11" fill="#fff" stroke="#111" stroke-width="1.2"/><path d="M2,2 L11,11 M11,2 L2,11" stroke="#e02020" stroke-width="1"/><g transform="translate(0,19)"><path d="M1,3.5 H12 M1,7 H12 M1,10.5 H12 M3.5,1 V12 M7,1 V12 M10.5,1 V12" stroke="#111" stroke-width="1.3"/></g><g transform="translate(0,38)"><path d="M6.5,1 V12 M1,6.5 H12" stroke="#999" stroke-width="3.5"/></g><g transform="translate(0,57)"><circle cx="6" cy="6" r="5" fill="none" stroke="#111" stroke-width="1.3"/><path d="M9.5,9.5 L12,12" stroke="#111" stroke-width="2"/><rect x="3" y="3" width="5" height="5" fill="none" stroke="#111"/></g><g transform="translate(0,76)"><circle cx="6" cy="6" r="5" fill="none" stroke="#111" stroke-width="1.3"/><path d="M9.5,9.5 L12,12" stroke="#111" stroke-width="2"/><rect x="4" y="4" width="4" height="4" fill="none" stroke="#111"/></g><g transform="translate(0,95)"><circle cx="6" cy="6" r="5" fill="none" stroke="#111" stroke-width="1.3"/><path d="M9.5,9.5 L12,12" stroke="#111" stroke-width="2"/><path d="M3,6 H9 M6,3 V9" stroke="#111"/></g><g transform="translate(0,114)"><circle cx="6" cy="6" r="5" fill="none" stroke="#111" stroke-width="1.3"/><path d="M9.5,9.5 L12,12" stroke="#111" stroke-width="2"/><path d="M3,6 H9" stroke="#111"/></g><g transform="translate(0,133)"><circle cx="6" cy="6" r="5" fill="none" stroke="#aaa" stroke-width="1.2"/><path d="M9.5,9.5 L12,12" stroke="#aaa" stroke-width="2"/></g><g transform="translate(0,152)"><circle cx="6" cy="6" r="5" fill="none" stroke="#aaa" stroke-width="1.2"/><path d="M9.5,9.5 L12,12" stroke="#aaa" stroke-width="2"/></g></svg>
<svg class="a" style="left:1840px;top:1002px" width="12" height="12" viewBox="0 0 12 12"><g fill="#aaa"><rect x="9" y="2" width="2" height="2"/><rect x="6" y="5" width="2" height="2"/><rect x="9" y="5" width="2" height="2"/><rect x="3" y="8" width="2" height="2"/><rect x="6" y="8" width="2" height="2"/><rect x="9" y="8" width="2" height="2"/></g></svg>

<div class="a" style="left:4px;top:119px;width:26px;height:3px;background-image:repeating-linear-gradient(90deg,#999 0 1px,transparent 1px 2.5px)"></div>
<svg class="a" style="left:5px;top:130px" width="24" height="24" viewBox="0 0 24 24"><path d="M4,2 L4,20 L9,15 L13,23 L16,21 L12,14 L19,14 Z" fill="#999"/></svg>
<svg class="a" style="left:5px;top:159px" width="24" height="24" viewBox="0 0 24 24"><circle cx="10" cy="10" r="8" fill="#e8e8e8" stroke="#888" stroke-width="2"/><rect x="6" y="6" width="8" height="8" fill="#2a6060"/><path d="M16,16 L23,23" stroke="#888" stroke-width="3"/></svg>
<svg class="a" style="left:5px;top:190px" width="24" height="24" viewBox="0 0 24 24"><path d="M1,15 L7,7 L14,15 L21,7" fill="none" stroke="#1a9fe0" stroke-width="2"/><rect x="0" y="13" width="3" height="3" fill="#b04010"/><rect x="6" y="5" width="3" height="3" fill="#b04010"/><rect x="13" y="13" width="3" height="3" fill="#b04010"/><rect x="20" y="5" width="3" height="3" fill="#b04010"/></svg>
<svg class="a" style="left:5px;top:218px" width="24" height="24" viewBox="0 0 24 24"><path d="M1,6 L6,1 H22 V17 L17,22 H1 Z" fill="#999"/><rect x="1" y="6" width="16" height="16" fill="#fff" stroke="#555" stroke-width="1.3"/></svg>
<svg class="a" style="left:5px;top:246px" width="24" height="24" viewBox="0 0 24 24"><path d="M3,14 Q3,4 12,4 Q21,4 21,14" fill="none" stroke="#1a9fe0" stroke-width="2"/><path d="M12,9 V15 M9,12 H15" stroke="#f07010" stroke-width="1.6"/><text x="3" y="23" font-size="9" font-family="Liberation Sans" fill="#1a9fe0" font-weight="bold">?</text></svg>
<svg class="a" style="left:5px;top:276px" width="24" height="24" viewBox="0 0 24 24"><circle cx="11" cy="11" r="9" fill="none" stroke="#1a9fe0" stroke-width="2"/><path d="M11,11 L16,6" stroke="#f07010" stroke-width="2"/></svg>
<svg class="a" style="left:5px;top:305px" width="24" height="24" viewBox="0 0 24 24"><path d="M11,2 L21,12 L11,22 L1,12 Z" fill="none" stroke="#1a9fe0" stroke-width="2"/></svg>
<svg class="a" style="left:5px;top:334px" width="24" height="24" viewBox="0 0 24 24"><rect x="1" y="4" width="22" height="16" fill="#f0e060" stroke="#888"/><path d="M7,12 Q12,6 17,12" fill="none" stroke="#1a9fe0" stroke-width="2"/><path d="M15,9 L18,13 L13,13 Z" fill="#1a9fe0"/></svg>
<svg class="a" style="left:5px;top:363px" width="24" height="24" viewBox="0 0 24 24"><path d="M2,3 V22 M21,3 V22 M2,10 H21" stroke="#1a9fe0" stroke-width="2"/><text x="11" y="7" font-size="7" fill="#1a9fe0" text-anchor="middle" font-family="Liberation Sans">x</text></svg>
<svg class="a" style="left:5px;top:391px" width="24" height="24" viewBox="0 0 24 24"><text x="11" y="23" font-family="Liberation Serif" font-weight="bold" font-size="29" fill="#1a9fe0" text-anchor="middle">T</text></svg>
<svg class="a" style="left:5px;top:420px" width="24" height="24" viewBox="0 0 24 24"><path d="M11,1 V23 M1,12 H22" stroke="#1a9fe0" stroke-width="2"/><path d="M11,1 V8" stroke="#c020c0" stroke-width="2"/></svg>
<svg class="a" style="left:5px;top:449px" width="24" height="24" viewBox="0 0 24 24"><path d="M4,5 L11,15 L20,12 M4,5 L4,20" fill="none" stroke="#f07010" stroke-width="1.6"/><rect x="1" y="2" width="7" height="7" fill="#f0e060" stroke="#888"/><rect x="15" y="9" width="7" height="7" fill="#f0e060" stroke="#888"/><rect x="1" y="17" width="7" height="6" fill="#f0e060" stroke="#888"/></svg>
<svg class="a" style="left:5px;top:478px" width="24" height="24" viewBox="0 0 24 24"><rect x="2" y="2" width="19" height="19" fill="#8ce020" stroke="#2a7a2a" stroke-width="1.5"/><path d="M4,20 L20,4 M2,13 L13,2 M9,21 L21,9" stroke="#2a7a2a" stroke-width="1.2"/><rect x="0" y="0" width="4" height="4" fill="#b04010"/><rect x="19" y="0" width="4" height="4" fill="#b04010"/><rect x="0" y="19" width="4" height="4" fill="#b04010"/><rect x="19" y="19" width="4" height="4" fill="#b04010"/></svg>
<svg class="a" style="left:5px;top:507px" width="24" height="24" viewBox="0 0 24 24"><path d="M2,2 L22,22" stroke="#888" stroke-width="1.5" stroke-dasharray="3,2"/></svg>
<svg class="a" style="left:5px;top:536px" width="24" height="24" viewBox="0 0 24 24"><rect x="1" y="1" width="22" height="22" fill="#ff0000"/></svg>
<svg class="a" style="left:27px;top:150px" width="7" height="7"><path d="M6.5,0.5 V6.5 H0.5 Z" fill="#f0f000" stroke="#111" stroke-width="1"/></svg>
<svg class="a" style="left:27px;top:179px" width="7" height="7"><path d="M6.5,0.5 V6.5 H0.5 Z" fill="#f0f000" stroke="#111" stroke-width="1"/></svg>
<svg class="a" style="left:27px;top:208px" width="7" height="7"><path d="M6.5,0.5 V6.5 H0.5 Z" fill="#f0f000" stroke="#111" stroke-width="1"/></svg>
<svg class="a" style="left:27px;top:237px" width="7" height="7"><path d="M6.5,0.5 V6.5 H0.5 Z" fill="#f0f000" stroke="#111" stroke-width="1"/></svg>
<svg class="a" style="left:27px;top:266px" width="7" height="7"><path d="M6.5,0.5 V6.5 H0.5 Z" fill="#f0f000" stroke="#111" stroke-width="1"/></svg>
<svg class="a" style="left:27px;top:295px" width="7" height="7"><path d="M6.5,0.5 V6.5 H0.5 Z" fill="#f0f000" stroke="#111" stroke-width="1"/></svg>
<svg class="a" style="left:27px;top:323px" width="7" height="7"><path d="M6.5,0.5 V6.5 H0.5 Z" fill="#f0f000" stroke="#111" stroke-width="1"/></svg>
<svg class="a" style="left:27px;top:382px" width="7" height="7"><path d="M6.5,0.5 V6.5 H0.5 Z" fill="#f0f000" stroke="#111" stroke-width="1"/></svg>
<svg class="a" style="left:27px;top:440px" width="7" height="7"><path d="M6.5,0.5 V6.5 H0.5 Z" fill="#f0f000" stroke="#111" stroke-width="1"/></svg>
<svg class="a" style="left:27px;top:498px" width="7" height="7"><path d="M6.5,0.5 V6.5 H0.5 Z" fill="#f0f000" stroke="#111" stroke-width="1"/></svg>
<svg class="a" style="left:27px;top:353px" width="7" height="7"><path d="M6.5,0.5 V6.5 H0.5 Z" fill="#111" stroke="#111" stroke-width="1"/></svg>
<svg class="a" style="left:27px;top:468px" width="7" height="7"><path d="M6.5,0.5 V6.5 H0.5 Z" fill="#111" stroke="#111" stroke-width="1"/></svg>
<div class="a" style="left:4px;top:566px;width:26px;height:3px;background-image:repeating-linear-gradient(90deg,#999 0 1px,transparent 1px 2.5px)"></div>
<div class="a" style="left:3px;top:574px;width:30px;height:29px;background:#cde0f2"></div>
<div class="t" style="left:4px;top:580px;font-size:17px;color:#1a9fe0;font-weight:bold;transform:scaleX(0.78);transform-origin:left">OFF</div>
<div class="a" style="left:3px;top:661px;width:30px;height:30px;background:#cde0f2"></div>
<svg class="a" style="left:5px;top:606px" width="24" height="24" viewBox="0 0 24 24"><path d="M2,2 L20,8 L12,11 L20,19 L17,22 L9,14 L6,21 Z" fill="#2ad0f0" stroke="#1a9fe0" stroke-width="1.2"/></svg>
<svg class="a" style="left:5px;top:636px" width="24" height="24" viewBox="0 0 24 24"><path d="M4,22 L16,10" stroke="#f07010" stroke-width="2"/><path d="M9,2 L10,6 L14,7 L10,8 L9,12 L8,8 L4,7 L8,6 Z" fill="#fff" stroke="#555" stroke-width="0.8"/></svg>
<svg class="a" style="left:5px;top:663px" width="24" height="24" viewBox="0 0 24 24"><path d="M12,2 L22,21 H2 Z" fill="none" stroke="#0aa" stroke-width="3"/><path d="M12,2 L22,21" stroke="#e07a20" stroke-width="3"/></svg>
<svg class="a" style="left:5px;top:692px" width="24" height="24" viewBox="0 0 24 24"><text x="1" y="22" font-size="15" font-weight="bold" font-family="Liberation Sans" fill="#1a9fe0">G</text><path d="M16,2 V14 M10,8 H22" stroke="#f07010" stroke-width="1.6"/><circle cx="16" cy="8" r="2.2" fill="#f0e020"/></svg>
<svg class="a" style="left:5px;top:722px" width="24" height="24" viewBox="0 0 24 24"><text x="1" y="23" font-size="15" font-weight="bold" font-family="Liberation Sans" fill="#1a1a6a">L</text><path d="M8,2 L22,16" stroke="#0a7a7a" stroke-width="1.6"/><path d="M16,3 V15 M10,9 H22 M12,5 L20,13 M20,5 L12,13" stroke="#f07010" stroke-width="1.3"/><circle cx="16" cy="9" r="2" fill="#f0e020"/></svg>
<svg class="a" style="left:5px;top:751px" width="24" height="24" viewBox="0 0 24 24"><text x="0" y="22" font-size="15" font-weight="bold" font-family="Liberation Sans" fill="#1a9fe0">I</text><path d="M16,3 V17 M9,10 H23 M11,5 L21,15 M21,5 L11,15" stroke="#f07010" stroke-width="1.3"/><circle cx="16" cy="10" r="2.2" fill="#f0e020"/><path d="M10,4 L22,16" stroke="#0a7a7a" stroke-width="1.3"/></svg>
<svg class="a" style="left:5px;top:780px" width="24" height="24" viewBox="0 0 24 24"><text x="0" y="22" font-size="14" font-weight="bold" font-family="Liberation Sans" fill="#1a9fe0">I2</text><path d="M17,3 V15 M11,9 H23 M13,5 L21,13 M21,5 L13,13" stroke="#f07010" stroke-width="1.3"/><circle cx="17" cy="9" r="2" fill="#f0e020"/></svg>
<svg class="a" style="left:5px;top:809px" width="24" height="24" viewBox="0 0 24 24"><text x="-1" y="23" font-size="14" font-weight="bold" font-family="Liberation Sans" fill="#1a9fe0">M</text><path d="M16,2 V14 M10,8 H22 M12,4 L20,12 M20,4 L12,12" stroke="#f07010" stroke-width="1.3"/><circle cx="16" cy="8" r="2" fill="#f0e020"/><path d="M9,2 L21,14" stroke="#0a7a7a" stroke-width="1.3"/></svg>
<svg class="a" style="left:5px;top:837px" width="24" height="24" viewBox="0 0 24 24"><text x="-1" y="24" font-size="12" font-weight="bold" font-family="Liberation Sans" fill="#1a9fe0">M2</text><path d="M2,8 H22 M12,2 V14" stroke="#f07010" stroke-width="1.5"/><circle cx="12" cy="8" r="2.2" fill="#f0e020"/><circle cx="3" cy="8" r="1.5" fill="#b04010"/><circle cx="21" cy="8" r="1.5" fill="#b04010"/></svg>
<svg class="a" style="left:5px;top:866px" width="24" height="24" viewBox="0 0 24 24"><rect x="2" y="2" width="20" height="20" fill="none" stroke="#1a9fe0" stroke-width="1.6"/><path d="M12,4 V20 M4,12 H20" stroke="#f07010" stroke-width="1.6"/><circle cx="12" cy="12" r="2.3" fill="#f0e020"/></svg>
<svg class="a" style="left:5px;top:895px" width="24" height="24" viewBox="0 0 24 24"><rect x="4" y="4" width="17" height="17" fill="none" stroke="#1a9fe0" stroke-width="1.6"/><path d="M1,1 L23,23" stroke="#0a4a7a" stroke-width="1.3"/><path d="M12,6 V19 M6,12 H19" stroke="#f07010" stroke-width="1.3"/><circle cx="12" cy="12" r="2" fill="#f0e020"/></svg>
<svg class="a" style="left:5px;top:923px" width="24" height="24" viewBox="0 0 24 24"><rect x="9" y="1" width="14" height="14" fill="none" stroke="#1a9fe0" stroke-width="1.6"/><path d="M16,3 V13 M11,8 H21" stroke="#f07010" stroke-width="1.3"/><circle cx="16" cy="8" r="2" fill="#f0e020"/><text x="0" y="24" font-size="11" font-weight="bold" font-family="Liberation Sans" fill="#1a9fe0">CG</text></svg>
<svg class="a" style="left:5px;top:953px" width="24" height="24" viewBox="0 0 24 24"><path d="M2,21 Q6,8 16,8 Q21,9 22,16" fill="none" stroke="#1a9fe0" stroke-width="2"/><path d="M16,3 V13 M11,8 H21 M13,5 L19,11 M19,5 L13,11" stroke="#f07010" stroke-width="1.3"/><circle cx="16" cy="8" r="2.2" fill="#f0e020"/><path d="M8,1 L16,8" stroke="#555"/></svg>
<svg class="a" style="left:5px;top:982px" width="24" height="24" viewBox="0 0 24 24"><path d="M12,2 L22,12 L12,22 L2,12 Z" fill="none" stroke="#f0c000" stroke-width="3" stroke-dasharray="2,1.5"/><path d="M12,2 L22,12 L12,22 L2,12 Z" fill="none" stroke="#1a9fe0" stroke-width="1" stroke-dasharray="1,3.5"/><circle cx="12" cy="12" r="1.8" fill="#1a9fe0"/></svg>

<div class="a" style="left:1096px;top:18px;width:705px;height:163px;background:#f0f0f0;border:1px solid #ababab;border-radius:8px;overflow:hidden"><div class="a" style="left:0;top:0;width:705px;height:31px;background:#eef2f9"></div><div class="a" style="left:0;top:31px;width:705px;height:18px;background:#fff"></div><div class="a" style="left:653px;top:50px;width:52px;height:113px;background:#2b579a"></div><div class="a" style="left:0;top:140px;width:653px;height:1px;background:#d9d9d9"></div><div class="a" style="left:179px;top:141px;width:1px;height:22px;background:#d9d9d9"></div><div class="a" style="left:254px;top:141px;width:1px;height:22px;background:#d9d9d9"></div></div>
<svg class="a" style="left:1103px;top:25px" width="17" height="17" viewBox="0 0 17 17"><rect x="0" y="0" width="17" height="17" rx="2" fill="#1a3f8a"/><circle cx="8.5" cy="8.5" r="6.5" fill="none" stroke="#fff" stroke-width="1.2"/><path d="M5,12 L8.5,4 L12,12 M6.2,9.5 H10.8" fill="none" stroke="#fff" stroke-width="1.2"/></svg>
<div class="t" style="left:1125px;top:27px;font-size:13px;color:#111;transform:scaleX(0.92);transform-origin:left">DC Toolkit Enterprise 2025</div>
<svg class="a" style="left:1777px;top:26px" width="14" height="14" viewBox="0 0 14 14"><path d="M1,1 L13,13 M13,1 L1,13" stroke="#111" stroke-width="1.2"/></svg>
<div class="t" style="left:1103px;top:53px;font-size:12.5px;color:#111;transform:scaleX(0.9);transform-origin:left">Datei</div>
<div class="t" style="left:1144px;top:53px;font-size:12.5px;color:#111;transform:scaleX(0.9);transform-origin:left">Ansicht</div>
<div class="t" style="left:1197px;top:53px;font-size:12.5px;color:#111;transform:scaleX(0.9);transform-origin:left">3D</div>
<div class="t" style="left:1226px;top:53px;font-size:12.5px;color:#111;transform:scaleX(0.9);transform-origin:left">Extras</div>
<div class="t" style="left:1269px;top:53px;font-size:12.5px;color:#111;transform:scaleX(0.9);transform-origin:left">?</div>
<div class="t" style="left:1099px;top:164px;font-size:12.5px;color:#111;transform:scaleX(0.9);transform-origin:left">Linien brechen</div>
<div class="t" style="left:1280px;top:164px;font-size:12.5px;color:#111;transform:scaleX(0.9);transform-origin:left">M10</div>
<svg class="a" style="left:1103px;top:75px" width="34" height="33" viewBox="0 0 34 33"><rect x="2" y="4" width="26" height="26" rx="5" fill="none" stroke="#3a7ad8" stroke-width="2.5"/><path d="M10,22 L28,4" stroke="#1a3f7a" stroke-width="3"/><path d="M20,2 L31,1 L30,12 Z" fill="#1a3f7a"/><rect x="15" y="17" width="17" height="16" fill="#7a1fa8"/><text x="23.5" y="30" font-size="12" font-weight="bold" font-family="Liberation Sans" fill="#fff" text-anchor="middle">N</text></svg>
<svg class="a" style="left:1148px;top:75px" width="34" height="33" viewBox="0 0 34 33"><rect x="3" y="17" width="24" height="9" rx="2" fill="#f08010"/><rect x="6" y="12" width="18" height="7" rx="2" fill="#f09020"/><rect x="5" y="26" width="2" height="3" fill="#333"/><rect x="23" y="26" width="2" height="3" fill="#333"/><path d="M27,8 H33 L31,3 H29 Z" fill="#f0e060"/><path d="M30,8 V29 M27,29 H33" stroke="#999"/></svg>
<svg class="a" style="left:1197px;top:75px" width="34" height="33" viewBox="0 0 34 33"><rect x="0" y="11" width="28" height="9" fill="#999"/></svg>
<svg class="a" style="left:1246px;top:75px" width="34" height="33" viewBox="0 0 34 33"><rect x="0" y="2" width="4" height="28" fill="#1a9fe0"/><rect x="14" y="2" width="4" height="28" fill="#1a9fe0"/></svg>
<svg class="a" style="left:1287px;top:75px" width="34" height="33" viewBox="0 0 34 33"><path d="M2,24 L11,12 L20,22 L30,10" fill="none" stroke="#1a9fe0" stroke-width="2"/><rect x="0" y="22" width="4" height="4" fill="#b04010"/><rect x="9" y="10" width="4" height="4" fill="#b04010"/><rect x="18" y="20" width="4" height="4" fill="#b04010"/><rect x="28" y="8" width="4" height="4" fill="#b04010"/></svg>
<svg class="a" style="left:1332px;top:75px" width="34" height="33" viewBox="0 0 34 33"><path d="M2,10 V30 M31,10 V30 M2,15 H31" stroke="#1a9fe0" stroke-width="2"/><text x="17" y="9" font-size="8" fill="#1a9fe0" text-anchor="middle" font-family="Liberation Sans">x</text></svg>
<svg class="a" style="left:1379px;top:75px" width="34" height="33" viewBox="0 0 34 33"><text x="17" y="31" font-family="Liberation Serif" font-weight="bold" font-size="40" fill="#1a9fe0" text-anchor="middle">T</text></svg>
<svg class="a" style="left:1425px;top:75px" width="34" height="33" viewBox="0 0 34 33"><text x="17" y="32" font-family="Liberation Serif" font-weight="bold" font-size="41" fill="#1a9fe0" text-anchor="middle">A</text></svg>
<svg class="a" style="left:1470px;top:75px" width="34" height="33" viewBox="0 0 34 33"><path d="M16,14 L32,22 L16,30 L0,22 Z" fill="#e05050"/><path d="M16,9 L32,17 L16,25 L0,17 Z" fill="#1a9fe0"/><path d="M16,4 L32,12 L16,20 L0,12 Z" fill="#f0c020"/></svg>
<svg class="a" style="left:1516px;top:75px" width="34" height="33" viewBox="0 0 34 33"><circle cx="24" cy="9" r="7" fill="none" stroke="#1a9fe0" stroke-width="2"/><path d="M24,0 V18 M15,9 H33" stroke="#1a9fe0" stroke-width="1.5"/><circle cx="8" cy="24" r="7" fill="none" stroke="#1a9fe0" stroke-width="2.5"/><rect x="5" y="21" width="6" height="6" fill="#1a9fe0"/></svg>
<svg class="a" style="left:1561px;top:75px" width="34" height="33" viewBox="0 0 34 33"><text x="17" y="25" font-size="24" font-weight="bold" font-family="Liberation Sans" fill="#1a9fe0" text-anchor="middle">?</text><path d="M2,17 H8 M5,14 V20 M27,17 H33 M30,14 V20" stroke="#f07010" stroke-width="1.8"/></svg>
<svg class="a" style="left:1609px;top:75px" width="34" height="33" viewBox="0 0 34 33"><rect x="1" y="1" width="31" height="31" fill="#f8f8f8" stroke="#888" stroke-width="1.6"/><circle cx="16.5" cy="8" r="2.6" fill="#1a9fe0"/><rect x="14" y="13" width="5" height="14" fill="#1a9fe0"/></svg>
<svg class="a" style="left:1654px;top:75px" width="34" height="33" viewBox="0 0 34 33"><path d="M16,1 V31 M1,16 H32" stroke="#888" stroke-width="1.2"/><rect x="8" y="10" width="17" height="12" fill="#f0c020" stroke="#f07010" stroke-width="1.5"/><circle cx="16.5" cy="16" r="3.5" fill="none" stroke="#f07010" stroke-width="1.5"/></svg>
<svg class="a" style="left:1105px;top:119px" width="34" height="34" viewBox="0 0 34 34"><rect x="0" y="14" width="27" height="3" fill="#999"/></svg>
<svg class="a" style="left:1152px;top:119px" width="34" height="34" viewBox="0 0 34 34"><rect x="0" y="13" width="26" height="4" fill="#999"/></svg>
<svg class="a" style="left:1197px;top:119px" width="34" height="34" viewBox="0 0 34 34"><rect x="0" y="12" width="27" height="6" fill="#999"/></svg>
<svg class="a" style="left:1243px;top:119px" width="34" height="34" viewBox="0 0 34 34"><rect x="0" y="12" width="6" height="5" fill="#999"/><rect x="10" y="12" width="6" height="5" fill="#999"/><rect x="20" y="12" width="6" height="5" fill="#999"/></svg>
<svg class="a" style="left:1290px;top:119px" width="34" height="34" viewBox="0 0 34 34"><rect x="0" y="12" width="7" height="5" fill="#e01010"/><rect x="10" y="12" width="3" height="5" fill="#e01010"/><rect x="16" y="12" width="7" height="5" fill="#e01010"/><rect x="26" y="12" width="2" height="5" fill="#e01010"/></svg>
<svg class="a" style="left:1336px;top:119px" width="34" height="34" viewBox="0 0 34 34"><rect x="0" y="12" width="3" height="5" fill="#e01010"/><rect x="6" y="12" width="3" height="5" fill="#e01010"/><rect x="12" y="12" width="8" height="5" fill="#e01010"/><rect x="23" y="12" width="3" height="5" fill="#e01010"/></svg>
<svg class="a" style="left:1382px;top:119px" width="34" height="34" viewBox="0 0 34 34"><rect x="0" y="12" width="7" height="5" fill="#3a3ad0"/><rect x="10" y="12" width="3" height="5" fill="#3a3ad0"/><rect x="15" y="12" width="3" height="5" fill="#3a3ad0"/><rect x="20" y="12" width="6" height="5" fill="#3a3ad0"/></svg>
<svg class="a" style="left:1425px;top:119px" width="34" height="34" viewBox="0 0 34 34"><text x="13" y="33" font-family="Liberation Serif" font-weight="bold" font-size="38" fill="#a8a8a8" text-anchor="middle">A</text><path d="M26,1 V11 M21,6 H31" stroke="#f07010" stroke-width="2"/></svg>
<svg class="a" style="left:1470px;top:119px" width="34" height="34" viewBox="0 0 34 34"><path d="M12,14 H32 M12,14 V32" stroke="#999" stroke-width="2"/><path d="M2,2 L12,14" stroke="#f07010" stroke-width="3" stroke-dasharray="5,3"/><path d="M14,12 L22,6" stroke="#f07010" stroke-width="3"/></svg>
<svg class="a" style="left:1516px;top:119px" width="34" height="34" viewBox="0 0 34 34"><path d="M2,32 Q6,2 16,4 Q26,6 28,30" fill="none" stroke="#1a9fe0" stroke-width="2"/><path d="M14,1 L18,5 M18,1 L14,5 M22,6 L26,10 M26,6 L22,10 M25,14 L29,18 M29,14 L25,18 M26,26 L30,30 M30,26 L26,30" stroke="#b04010" stroke-width="1.6"/></svg>
<svg class="a" style="left:1762px;top:110px" width="26" height="28" viewBox="0 0 26 28"><path d="M1,3 Q1,1 3,1 H21 L25,5 V25 Q25,27 23,27 H3 Q1,27 1,25 Z" fill="#3fa0e0"/><rect x="6" y="1" width="12" height="8" rx="1" fill="#e8eef4"/><rect x="13" y="2" width="3" height="5" fill="#1a6fc0"/><rect x="4" y="14" width="18" height="13" rx="1" fill="#f2f2f2"/><path d="M7,18 H19 M7,22 H19" stroke="#aaa"/></svg>

<div class="a" style="left:1863px;top:118px;width:24px;height:907px;background:#f8f8f9"></div>
<div class="a" style="left:1866px;top:122px;width:20px;height:71px;background:linear-gradient(90deg,#f0f0f0,#fff);border:1px solid #c8c8c8;border-right:none;border-radius:4px 0 0 4px"></div>
<div class="a" style="left:1866px;top:207px;width:20px;height:57px;background:linear-gradient(90deg,#f0f0f0,#fff);border:1px solid #c8c8c8;border-right:none;border-radius:4px 0 0 4px"></div>
<div class="t" style="left:1868px;top:126px;font-size:12.5px;color:#5a4a6a;writing-mode:vertical-rl;transform:scaleY(0.92);transform-origin:top">Strukturinfo</div>
<div class="t" style="left:1868px;top:211px;font-size:12.5px;color:#5a4a6a;writing-mode:vertical-rl;transform:scaleY(0.92);transform-origin:top">Themes</div>
<div class="a" style="left:1890px;top:129px;width:25px;height:3px;background-image:repeating-linear-gradient(90deg,#999 0 1px,transparent 1px 2.5px)"></div>
<div class="a" style="left:1888px;top:136px;width:30px;height:29px;background:#f8f8fa"></div>
<div class="a" style="left:1892px;top:140px;width:22px;height:21px;background:#000"></div>
<div class="a" style="left:1892px;top:169px;width:22px;height:21px;background:#808080"></div>
<div class="a" style="left:1892px;top:198px;width:22px;height:21px;background:#b8b8b8"></div>
<div class="a" style="left:1892px;top:227px;width:22px;height:21px;background:#e0e0e0"></div>
<div class="a" style="left:1892px;top:256px;width:22px;height:21px;background:#aeaeae"></div>
<div class="a" style="left:1892px;top:285px;width:22px;height:21px;background:#bebebe"></div>
<div class="a" style="left:1892px;top:314px;width:22px;height:21px;background:#505050"></div>
<div class="a" style="left:1892px;top:343px;width:22px;height:21px;background:#8c8c8c"></div>
<div class="a" style="left:1889px;top:370px;width:28px;height:1px;background:#d0d0d4"></div>
<div class="a" style="left:1889px;top:405px;width:28px;height:1px;background:#d0d0d4"></div>
<div class="a" style="left:1889px;top:440px;width:28px;height:1px;background:#d0d0d4"></div>
<div class="a" style="left:1889px;top:475px;width:28px;height:1px;background:#d0d0d4"></div>
<div class="t" style="left:1891px;top:373px;font-size:29px;color:#a8a8a8;font-family:'Liberation Serif',serif">A</div>
<div class="a" style="left:1891px;top:411px;width:24px;height:24px;background:#b8b8b8"></div>
<svg class="a" style="left:1891px;top:413px" width="24" height="20" viewBox="0 0 24 20"><path d="M2,8 H16 Q19,8 19,10 Q19,12 16,12 H13 Q11,14 9,15 H4 Z" fill="#fff" stroke="#666"/></svg>
<svg class="a" style="left:1889px;top:445px" width="28" height="28" viewBox="0 0 28 28"><ellipse cx="12" cy="15" rx="11" ry="10" fill="#f0d080" stroke="#a07020"/><circle cx="7" cy="11" r="2" fill="#e02020"/><circle cx="12" cy="8" r="2" fill="#20a020"/><circle cx="17" cy="10" r="2" fill="#2050e0"/><circle cx="7" cy="18" r="2" fill="#f0f020"/><path d="M10,24 L26,4" stroke="#c05010" stroke-width="3"/></svg>
<div class="a" style="left:1888px;top:479px;width:30px;height:30px;background:#dbe8f5;border:1px solid #5b9bd5"></div>
<svg class="a" style="left:1891px;top:482px" width="24" height="24" viewBox="0 0 24 24"><rect x="1" y="9" width="9" height="9" fill="#888"/><rect x="5" y="13" width="9" height="9" fill="#aaa" stroke="#777"/><rect x="14" y="1" width="4" height="4" fill="#e02020"/><rect x="18" y="1" width="4" height="4" fill="#20a020"/><rect x="14" y="5" width="4" height="4" fill="#2050e0"/><rect x="18" y="5" width="4" height="4" fill="#f0c020"/><path d="M19,22 V12 M16,15 L19,12 L22,15" fill="none" stroke="#1a9fe0" stroke-width="1.8"/></svg>

<div class="grip" style="left:10px;top:1031px;height:26px"></div>
<div class="inp" style="left:22px;top:1031px;width:124px;height:23px;"><span>Perspektive</span></div>
<svg class="a" style="left:130px;top:1039px" width="10" height="8" viewBox="0 0 10 8"><path d="M1,2 H9 L5,7 Z" fill="#555"/></svg>
<div class="a" style="left:148px;top:1031px;width:1px;height:25px;background:#cfd0d6"></div>
<div class="inp" style="left:152px;top:1031px;width:62px;height:23px;"><span>20.00</span></div>
<div class="a" style="left:217px;top:1031px;width:1px;height:25px;background:#cfd0d6"></div>
<svg class="a" style="left:224px;top:1031px" width="26" height="24" viewBox="0 0 26 24"><rect x="4" y="6" width="16" height="11" rx="1.5" fill="#fff" stroke="#888" stroke-width="1.3"/><rect x="8" y="3" width="6" height="3" fill="#888"/><circle cx="12" cy="11.5" r="3.3" fill="none" stroke="#888" stroke-width="1.3"/><path d="M3,21 H22 M3,21 L7,18 M3,21 L7,24" stroke="#888" stroke-width="1.5" fill="none"/></svg>
<svg class="a" style="left:253px;top:1031px" width="26" height="24" viewBox="0 0 26 24"><rect x="4" y="6" width="16" height="11" rx="1.5" fill="#fff" stroke="#888" stroke-width="1.3"/><rect x="8" y="3" width="6" height="3" fill="#888"/><circle cx="12" cy="11.5" r="3.3" fill="none" stroke="#888" stroke-width="1.3"/><path d="M3,21 H22 M22,21 L18,18 M22,21 L18,24" stroke="#888" stroke-width="1.5" fill="none"/></svg>
<div class="inp" style="left:280px;top:1031px;width:62px;height:23px;"><span>15.00</span></div>
<div class="a" style="left:346px;top:1031px;width:1px;height:25px;background:#cfd0d6"></div>
<svg class="a" style="left:349px;top:1031px" width="26" height="24" viewBox="0 0 26 24"><rect x="4" y="6" width="16" height="11" rx="1.5" fill="#fff" stroke="#888" stroke-width="1.3"/><rect x="8" y="3" width="6" height="3" fill="#888"/><circle cx="12" cy="11.5" r="3.3" fill="none" stroke="#888" stroke-width="1.3"/><path d="M23,3 V22 M23,3 L20,7 M23,3 L26,7" stroke="#888" stroke-width="1.5" fill="none"/></svg>
<svg class="a" style="left:379px;top:1031px" width="26" height="24" viewBox="0 0 26 24"><rect x="4" y="6" width="16" height="11" rx="1.5" fill="#fff" stroke="#888" stroke-width="1.3"/><rect x="8" y="3" width="6" height="3" fill="#888"/><circle cx="12" cy="11.5" r="3.3" fill="none" stroke="#888" stroke-width="1.3"/><path d="M23,3 V22 M23,22 L20,18 M23,22 L26,18" stroke="#888" stroke-width="1.5" fill="none"/></svg>
<div class="inp" style="left:408px;top:1031px;width:62px;height:23px;"><span>0.00</span></div>
<div class="a" style="left:474px;top:1031px;width:1px;height:25px;background:#cfd0d6"></div>
<svg class="a" style="left:477px;top:1030px" width="26" height="26" viewBox="0 0 26 26"><circle cx="13" cy="13" r="11" fill="none" stroke="#999" stroke-width="1.5"/><rect x="6" y="9" width="14" height="9" rx="1" fill="#fff" stroke="#888" stroke-width="1.2"/><circle cx="13" cy="13.5" r="2.5" fill="none" stroke="#888"/></svg>
<svg class="a" style="left:508px;top:1030px" width="26" height="26" viewBox="0 0 26 26"><circle cx="13" cy="13" r="11" fill="none" stroke="#999" stroke-width="1.5"/><rect x="6" y="9" width="14" height="9" rx="1" fill="#fff" stroke="#888" stroke-width="1.2"/><circle cx="13" cy="13.5" r="2.5" fill="none" stroke="#888"/></svg>
<div class="inp" style="left:541px;top:1031px;width:125px;height:23px;"><span>1000.00</span></div>
<div class="a" style="left:670px;top:1031px;width:1px;height:25px;background:#cfd0d6"></div>
<svg class="a" style="left:676px;top:1031px" width="22" height="24" viewBox="0 0 22 24"><path d="M4,2 H14 V12 H19 L9,23 L0,12 H4 Z" fill="#666"/><path d="M7,2 V0 H17 V10" fill="none" stroke="#999" stroke-width="1.5"/></svg>
<svg class="a" style="left:706px;top:1031px" width="22" height="24" viewBox="0 0 22 24"><path d="M4,22 H14 V12 H19 L9,1 L0,12 H4 Z" fill="#666"/><path d="M14,22 V18 H20 V24" fill="none" stroke="#999" stroke-width="1.5"/></svg>
<svg class="a" style="left:735px;top:1030px" width="26" height="26" viewBox="0 0 26 26"><rect x="1" y="3" width="14" height="10" rx="1" fill="#fff" stroke="#888" stroke-width="1.2"/><circle cx="8" cy="8" r="2.5" fill="none" stroke="#888"/><path d="M12,12 L20,20" stroke="#888" stroke-width="1.5"/><path d="M19,19 L24,24 M24,19 L19,24" stroke="#e05010" stroke-width="1.3"/></svg>
<svg class="a" style="left:765px;top:1030px" width="26" height="26" viewBox="0 0 26 26"><path d="M13,1 V25 M1,13 H25" stroke="#888" stroke-width="1.4"/><rect x="6" y="9" width="14" height="9" rx="1" fill="#fff" stroke="#888" stroke-width="1.2"/><circle cx="13" cy="13.5" r="2.5" fill="none" stroke="#888"/></svg>
<svg class="a" style="left:795px;top:1030px" width="26" height="26" viewBox="0 0 26 26"><path d="M13,1 V25 M1,13 H25" stroke="#888" stroke-width="1.4"/><rect x="6" y="8" width="14" height="10" rx="1" fill="#f0c020" stroke="#f05010" stroke-width="1.5"/><circle cx="13" cy="13" r="2.8" fill="none" stroke="#f05010" stroke-width="1.4"/></svg>
<div class="grip" style="left:1051px;top:1031px;height:26px"></div>
<div class="inp" style="left:1064px;top:1031px;width:311px;height:23px;"><span></span></div>
<div class="a" style="left:1068px;top:1042px;width:113px;height:1px;background:#111"></div>
<div class="t" style="left:1191px;top:1037px;font-size:14px;color:#111;">Voll</div>
<svg class="a" style="left:1360px;top:1039px" width="10" height="8" viewBox="0 0 10 8"><path d="M1,2 H9 L5,7 Z" fill="#bbb"/></svg>
<div class="a" style="left:1378px;top:1031px;width:1px;height:25px;background:#cfd0d6"></div>
<svg class="a" style="left:1383px;top:1028px" width="28" height="28" viewBox="0 0 28 28"><path d="M1,27 L11,3 H14 L24,27 H19 L16,19 H9 L6,27 Z M10,15 H15 L12.5,8 Z" fill="#888" fill-rule="evenodd"/><path d="M21,1 V9 M17,5 H25" stroke="#f07010" stroke-width="1.8"/></svg>
<div class="t" style="left:1410px;top:1029px;font-size:28px;color:#888;font-family:'Liberation Serif',serif">A</div>
<div class="a" style="left:1443px;top:1031px;width:1px;height:25px;background:#cfd0d6"></div>
<div class="t" style="left:1451px;top:1029px;font-size:28px;color:#888;font-family:'Liberation Serif',serif;font-weight:bold">F</div>
<div class="a" style="left:1482px;top:1041px;width:16px;height:3px;background:#888"></div>
<div class="inp" style="left:1506px;top:1031px;width:310px;height:23px;background:#f5f5f5;border-color:#d0d0d8"></div>
<div class="t" style="left:1509px;top:1036px;font-size:12.5px;color:#9a9a9a;transform:scaleX(0.92);transform-origin:left">LTyp:61&nbsp; Skal.:0&nbsp; Breite:0.05 mm</div>
<svg class="a" style="left:1800px;top:1039px" width="10" height="8" viewBox="0 0 10 8"><path d="M1,2 H9 L5,7 Z" fill="#bbb"/></svg>
<div class="a" style="left:1819px;top:1031px;width:1px;height:25px;background:#cfd0d6"></div>
<svg class="a" style="left:1825px;top:1033px" width="26" height="20" viewBox="0 0 26 20"><path d="M1,9 H17 Q21,9 21,11 Q21,13 17,13 H13 Q11,16 8,17 H3 Z" fill="#fff" stroke="#666" stroke-width="1.4"/><path d="M1,9 L10,5 H24" fill="none" stroke="#666" stroke-width="1.2"/></svg>
<div class="t" style="left:1856px;top:1028px;font-size:29px;color:#888;font-family:'Liberation Serif',serif;font-weight:bold">S</div>
<div class="a" style="left:1882px;top:1031px;width:1px;height:25px;background:#cfd0d6"></div>
<div class="a" style="left:1887px;top:1028px;width:31px;height:30px;background:#dbe8f5;border:1px solid #5b9bd5"></div>
<svg class="a" style="left:1890px;top:1031px" width="26" height="24" viewBox="0 0 26 24"><path d="M12,4 H16 M18,4 H20 M22,4 H25" stroke="#20b020" stroke-width="2.2"/><rect x="1" y="10" width="9" height="9" fill="#888"/><rect x="5" y="14" width="9" height="9" fill="#aaa" stroke="#777"/><path d="M20,23 V13 M17,16 L20,13 L23,16" fill="none" stroke="#1a9fe0" stroke-width="1.8"/></svg>

<div class="a" style="left:0;top:1059px;width:1920px;height:21px;background:#68217a"></div>
<div class="t" style="left:3px;top:1063px;font-size:13px;color:#fff;transform:scaleX(0.9);transform-origin:left">2-D Fang-/Markiermodus</div>
<div class="t" style="left:1391px;top:1063px;font-size:13px;color:#fff;transform:scaleX(0.9);transform-origin:left">mm</div>
<div class="t" style="left:1439px;top:1063px;font-size:13px;color:#fff;transform:scaleX(0.9);transform-origin:left">AUS</div>
<div class="t" style="left:1480px;top:1063px;font-size:13px;color:#fff;transform:scaleX(0.9);transform-origin:left">0</div>
<div class="t" style="left:1537px;top:1063px;font-size:13px;color:#fff;transform:scaleX(0.9);transform-origin:left">430%</div>
<div class="t" style="left:1627px;top:1063px;font-size:13px;color:#fff;transform:scaleX(0.9);transform-origin:left">3D SHAD</div>
<div class="t" style="left:1755px;top:1063px;font-size:13px;color:#b9a0c2;transform:scaleX(0.9);transform-origin:left">PKT SETZ</div>
<div class="t" style="left:1827px;top:1063px;font-size:13px;color:#fff;transform:scaleX(0.9);transform-origin:left">KP STANDARD</div>

</body></html>
